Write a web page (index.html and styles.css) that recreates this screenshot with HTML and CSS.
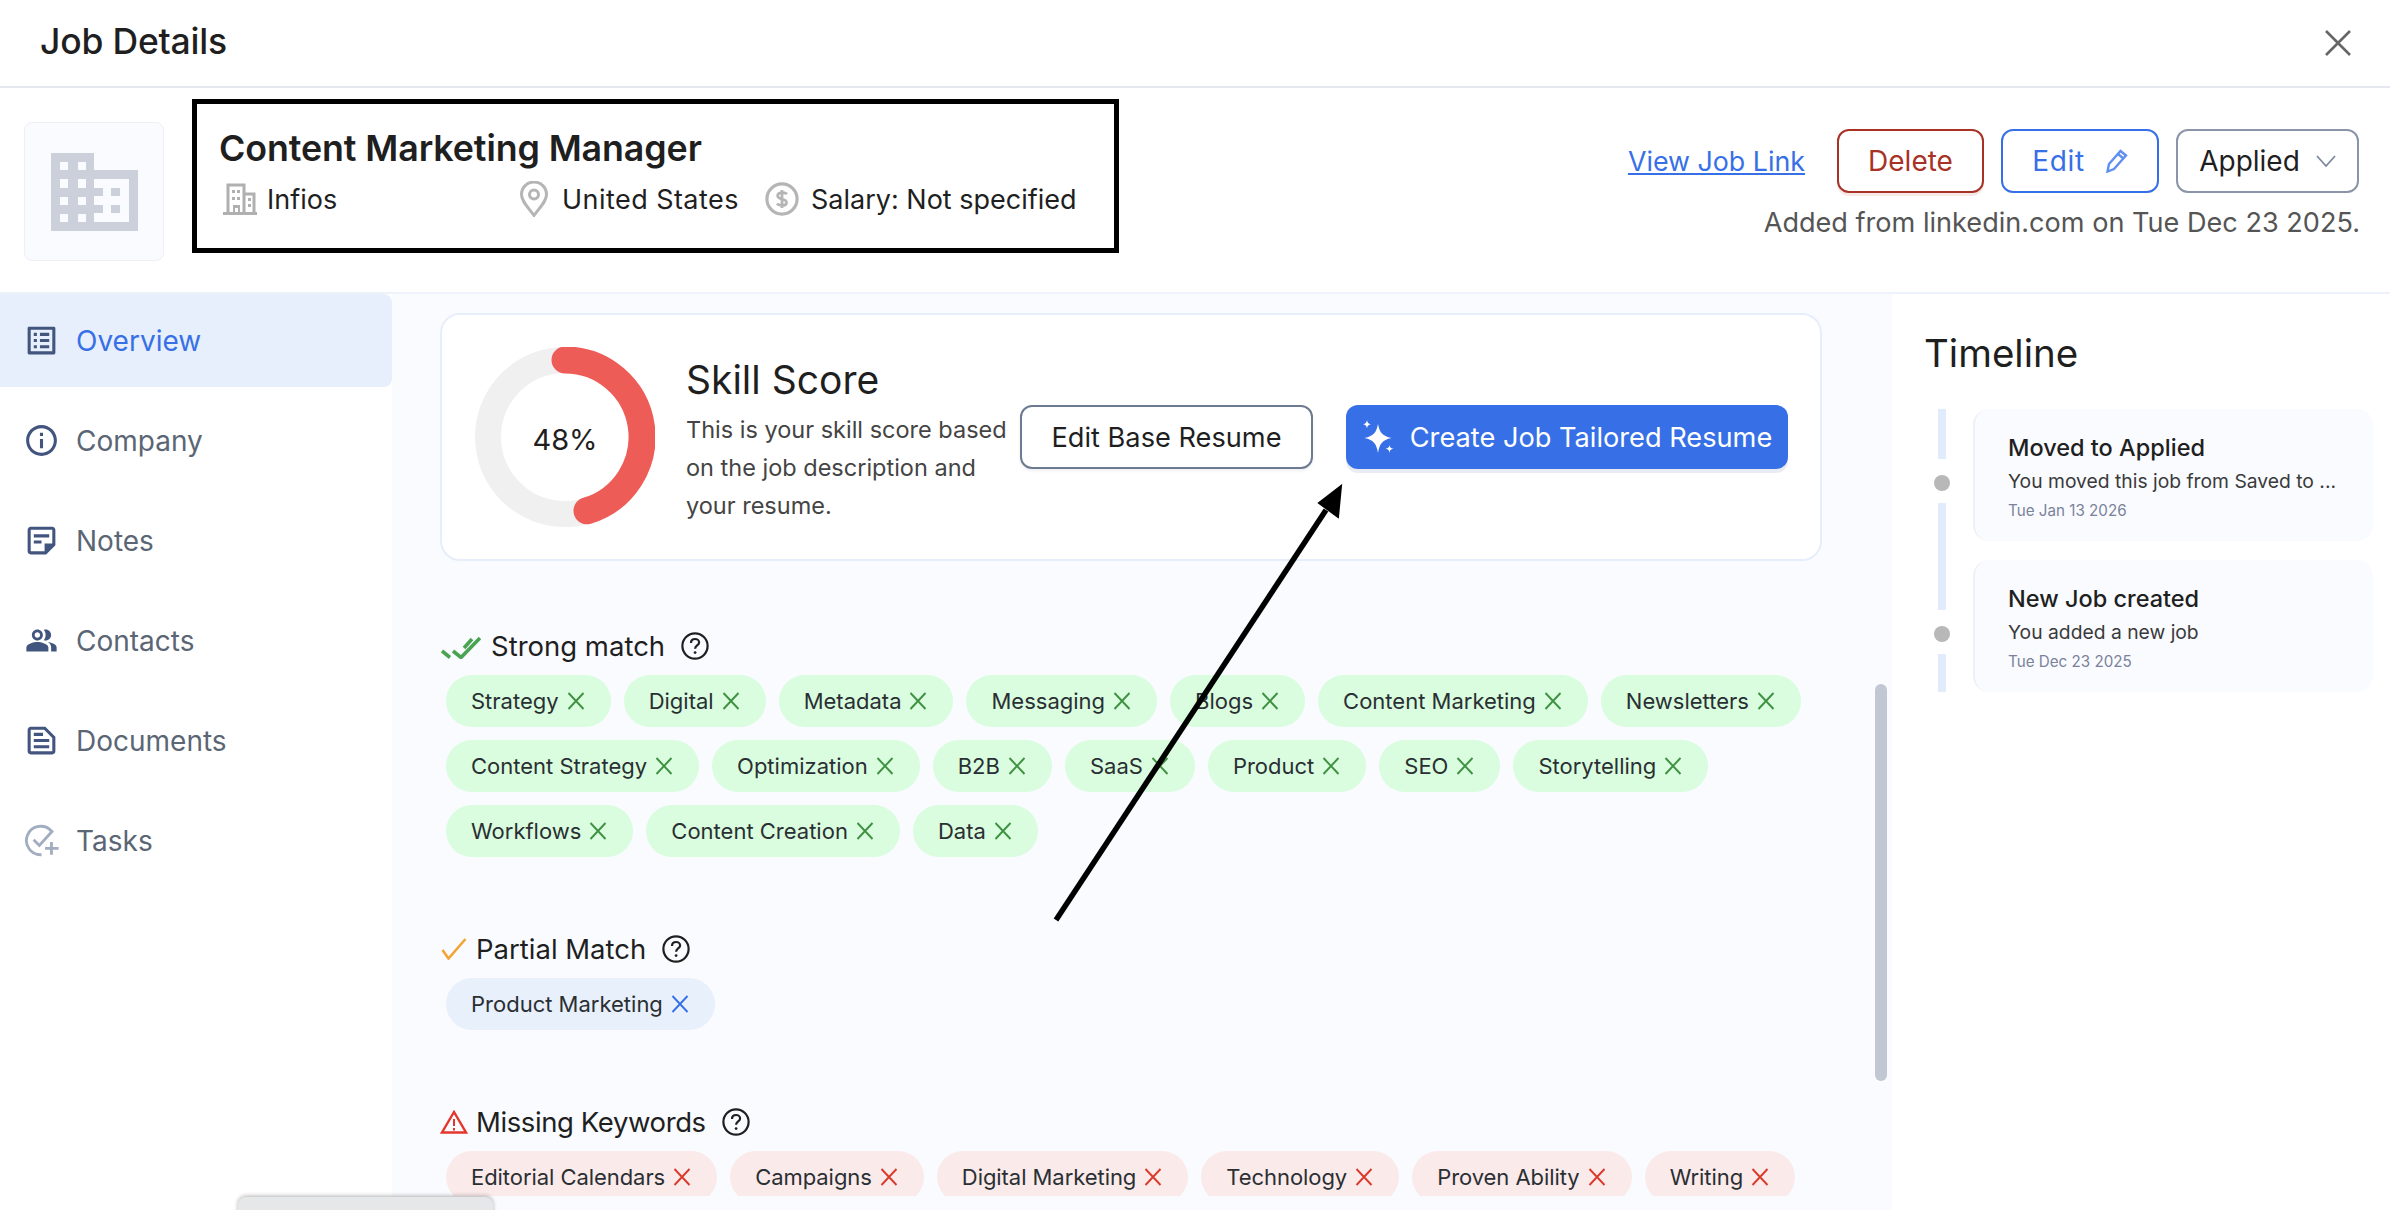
FILE: index.html
```html
<!DOCTYPE html>
<html lang="en">
<head>
<meta charset="utf-8">
<title>Job Details</title>
<link rel="stylesheet" href="styles.css">
</head>
<body>
<svg class="defs" width="0" height="0" aria-hidden="true">
  <symbol id="x" viewBox="0 0 18 18"><path d="M1.500 1 16.500 17M16.500 1 1.500 17" fill="none" stroke="currentColor" stroke-width="1.900"/></symbol>
  <symbol id="help" viewBox="0 0 28 28"><circle cx="14" cy="14" r="12.600" fill="none" stroke="currentColor" stroke-width="2.200"/><path d="M10 11c0-2.600 1.900-4 4.100-4 2.300 0 4 1.500 4 3.500 0 3-4 3-4 6.200" fill="none" stroke="currentColor" stroke-width="2.200"/><circle cx="14.100" cy="20.600" r="1.400" fill="currentColor"/></symbol>
</svg>
<div class="app">
  <header class="topbar">
    <h1 class="page-title">Job Details</h1>
    <svg class="close" viewBox="0 0 26 26"><path d="M1 1 25 25M25 1 1 25" fill="none" stroke="#666" stroke-width="2.600"/></svg>
  </header>

  <section class="job-head">
    <div class="logo-box">
      <svg class="logo-icon" viewBox="0 0 87 78">
        <path d="M0 0h43v17h44v61H0z" fill="#cbd0da"/>
        <g fill="#f9fbff">
          <rect x="9" y="9" width="8" height="8"/><rect x="27" y="9" width="8" height="8"/>
          <rect x="9" y="26" width="8" height="9"/><rect x="27" y="26" width="8" height="9"/>
          <rect x="9" y="44" width="8" height="8"/><rect x="27" y="44" width="8" height="8"/>
          <rect x="9" y="61" width="8" height="8"/><rect x="27" y="61" width="8" height="8"/>
          <rect x="43" y="26" width="35" height="43"/>
        </g>
        <g fill="#cbd0da">
          <rect x="43" y="35" width="9" height="8"/><rect x="43" y="52" width="9" height="8"/>
          <rect x="60" y="35" width="9" height="8"/><rect x="60" y="52" width="9" height="8"/>
        </g>
      </svg>
    </div>
    <div class="job-info">
      <h2 class="job-title">Content Marketing Manager</h2>
      <div class="job-meta">
        <div class="meta-item meta-company">
          <svg class="meta-building" viewBox="0 0 36 32"><path d="M6 31V2h16v29M22 11h10v20M1 30.500h34" fill="none" stroke="#b0b0b0" stroke-width="3"/><path d="M10 7h3v3h-3zm5 0h3v3h-3zM10 14h3v3h-3zm5 0h3v3h-3zM26 15h3v3h-3zm0 6h3v3h-3zM11 22h7v9h-2v-6h-3v6h-2z" fill="#b0b0b0"/></svg>
          <span>Infios</span>
        </div>
        <div class="meta-item meta-location">
          <svg class="meta-pin" viewBox="0 0 28 36"><path d="M14 34.500C8 26 1.500 20.500 1.500 13.500a12.500 12.500 0 0 1 25 0C26.500 20.500 20 26 14 34.500z" fill="none" stroke="#b5b5b5" stroke-width="3"/><circle cx="14" cy="13.500" r="4.500" fill="none" stroke="#b5b5b5" stroke-width="3"/></svg>
          <span class="meta-location-text">United States</span>
        </div>
        <div class="meta-item">
          <svg class="meta-dollar" viewBox="0 0 32 32"><circle cx="16" cy="16" r="14.200" fill="none" stroke="#b5b5b5" stroke-width="3"/><path d="M20.500 11.500c-1-1.700-7.800-2.500-8.600 1-.8 4.500 8.800 2.600 8.400 7-.4 3.500-7.500 3-9 .8M16 7.500v17" fill="none" stroke="#b5b5b5" stroke-width="2.600"/></svg>
          <span>Salary: Not specified</span>
        </div>
      </div>
    </div>
    <div class="job-actions">
      <div class="action-row">
        <a class="job-link" href="#">View Job Link</a>
        <button class="btn btn-delete">Delete</button>
        <button class="btn btn-edit"><span class="btn-edit-label">Edit</span>
          <svg class="btn-icon" viewBox="0 0 22 24"><path d="M1.500 22.500 3 15 14.500 2 20 6.500 8 20zM12 5l5.500 4.500" fill="none" stroke="#5f8fef" stroke-width="2.400"/></svg>
        </button>
        <button class="btn btn-status">Applied
          <svg class="chev" viewBox="0 0 20 12"><path d="M1 1l9 10 9-10" fill="none" stroke="#7d8a9f" stroke-width="1.800"/></svg>
        </button>
      </div>
      <p class="added">Added from linkedin.com on Tue Dec 23 2025.</p>
    </div>
  </section>

  <div class="body">
    <nav class="sidebar">
      <a class="nav-item active" href="#">
        <svg class="nav-icon" viewBox="0 0 24 24"><path d="M19 5v14H5V5h14m1.100-2H3.900c-.5 0-.9.4-.9.9v16.200c0 .4.4.9.9.9h16.200c.4 0 .9-.5.9-.9V3.900c0-.5-.5-.9-.9-.9zM11 7h6v2h-6V7zm0 4h6v2h-6v-2zm0 4h6v2h-6zM7 7h2v2H7zm0 4h2v2H7zm0 4h2v2H7z"/></svg>
        <span>Overview</span>
      </a>
      <a class="nav-item" href="#">
        <svg class="nav-icon" viewBox="0 0 24 24"><path d="M11 7h2v2h-2zm0 4h2v6h-2zm1-9C6.480 2 2 6.480 2 12s4.480 10 10 10 10-4.480 10-10S17.520 2 12 2zm0 18c-4.410 0-8-3.590-8-8s3.590-8 8-8 8 3.590 8 8-3.590 8-8 8z"/></svg>
        <span>Company</span>
      </a>
      <a class="nav-item" href="#">
        <svg class="nav-icon" viewBox="0 0 24 24"><path d="M19 5v9h-5v5H5V5h14m0-2H5c-1.100 0-2 .9-2 2v14c0 1.100.9 2 2 2h10l6-6V5c0-1.100-.9-2-2-2zm-7 11H7v-2h5v2zm5-4H7V8h10v2z"/></svg>
        <span>Notes</span>
      </a>
      <a class="nav-item" href="#">
        <svg class="nav-icon nav-icon-small" viewBox="0 0 24 24"><path d="M16.670 13.130C18.040 14.060 19 15.320 19 17v3h4v-3c0-2.180-3.570-3.470-6.330-3.870zM15 12c2.210 0 4-1.790 4-4s-1.790-4-4-4c-.47 0-.91.1-1.330.24C14.500 5.270 15 6.580 15 8s-.5 2.730-1.330 3.760c.42.14.86.24 1.330.24zM9 12c2.210 0 4-1.790 4-4s-1.790-4-4-4-4 1.790-4 4 1.790 4 4 4zm0-6c1.100 0 2 .9 2 2s-.9 2-2 2-2-.9-2-2 .9-2 2-2zM9 13c-2.670 0-8 1.340-8 4v3h16v-3c0-2.660-5.330-4-8-4z"/></svg>
        <span>Contacts</span>
      </a>
      <a class="nav-item" href="#">
        <svg class="nav-icon" viewBox="0 0 24 24"><path d="M14.500 3H5c-1.100 0-2 .9-2 2v14c0 1.100.9 2 2 2h14c1.100 0 2-.9 2-2V9.500L14.500 3zM19 19H5V5h8.700L19 10.300V19zM7 15h10v2H7zm0-4h10v2H7zm0-4h6v2H7z"/></svg>
        <span>Documents</span>
      </a>
      <a class="nav-item" href="#">
        <svg class="nav-icon nav-icon-muted" viewBox="0 0 26 24"><path d="M20 5.500A10 10 0 1 0 13 22" fill="none" stroke="#a3adc2" stroke-width="2"/><path d="M7.500 11.500l4 4L21 5" fill="none" stroke="#a3adc2" stroke-width="2"/><path d="M20 13v9M15.500 17.500H25" fill="none" stroke="#a3adc2" stroke-width="2"/></svg>
        <span>Tasks</span>
      </a>
    </nav>

    <main class="main">
      <div class="scroll">
        <section class="score-card">
          <svg class="donut" viewBox="0 0 180 180">
            <circle cx="90" cy="90" r="77" fill="none" stroke="#f0f0f0" stroke-width="26"/>
            <path d="M90 13A77 77 0 0 1 112 163.800" fill="none" stroke="#ee5c58" stroke-width="27" stroke-linecap="round"/>
            <text class="donut-label" x="90" y="103" text-anchor="middle">48%</text>
          </svg>
          <div class="score-text">
            <h3 class="score-title">Skill Score</h3>
            <p class="score-desc">This is your skill score based on the job description and your resume.</p>
          </div>
          <button class="btn btn-base">Edit Base Resume</button>
          <button class="btn btn-create">
            <svg class="spark" viewBox="0 0 32 34"><path d="M16 4C17.500 12 20 16 29.500 18 20 20 17.500 24 16 33 14.500 24 12 20 2.500 18 12 16 14.500 12 16 4z" fill="#fff"/><path d="M5 0c.5 2.800 1.200 3.500 4 4.200-2.800.7-3.500 1.400-4 4.300-.5-2.900-1.200-3.600-4-4.300 2.800-.7 3.500-1.400 4-4.200zM27.500 25c.4 2.400 1 3 4 3.700-3 .7-3.600 1.300-4 4.300-.4-3-1-3.600-4-4.300 3-.7 3.600-1.300 4-3.700z" fill="#fff"/></svg>
            Create Job Tailored Resume
          </button>
        </section>

        <section class="match match-strong">
          <h4 class="match-title">
            <svg class="mi-double" viewBox="0 0 40 24"><path d="M1 16l8 6.500M12 16l8 6.500L39 3M23 13l8-9" fill="none" stroke="#4aa352" stroke-width="3.600"/></svg>
            Strong match
            <svg class="help"><use href="#help"/></svg>
          </h4>
          <div class="chips">
            <span class="chip">Strategy<svg class="chip-x"><use href="#x"/></svg></span>
            <span class="chip">Digital<svg class="chip-x"><use href="#x"/></svg></span>
            <span class="chip">Metadata<svg class="chip-x"><use href="#x"/></svg></span>
            <span class="chip">Messaging<svg class="chip-x"><use href="#x"/></svg></span>
            <span class="chip">Blogs<svg class="chip-x"><use href="#x"/></svg></span>
            <span class="chip">Content Marketing<svg class="chip-x"><use href="#x"/></svg></span>
            <span class="chip">Newsletters<svg class="chip-x"><use href="#x"/></svg></span>
            <span class="chip">Content Strategy<svg class="chip-x"><use href="#x"/></svg></span>
            <span class="chip">Optimization<svg class="chip-x"><use href="#x"/></svg></span>
            <span class="chip">B2B<svg class="chip-x"><use href="#x"/></svg></span>
            <span class="chip">SaaS<svg class="chip-x"><use href="#x"/></svg></span>
            <span class="chip">Product<svg class="chip-x"><use href="#x"/></svg></span>
            <span class="chip">SEO<svg class="chip-x"><use href="#x"/></svg></span>
            <span class="chip">Storytelling<svg class="chip-x"><use href="#x"/></svg></span>
            <span class="chip">Workflows<svg class="chip-x"><use href="#x"/></svg></span>
            <span class="chip">Content Creation<svg class="chip-x"><use href="#x"/></svg></span>
            <span class="chip">Data<svg class="chip-x"><use href="#x"/></svg></span>
          </div>
        </section>

        <section class="match match-partial">
          <h4 class="match-title">
            <svg class="mi-check" viewBox="0 0 26 22"><path d="M1.500 12l6 8.500L24.500 1" fill="none" stroke="#f2a534" stroke-width="2.600"/></svg>
            Partial Match
            <svg class="help"><use href="#help"/></svg>
          </h4>
          <div class="chips">
            <span class="chip">Product Marketing<svg class="chip-x"><use href="#x"/></svg></span>
          </div>
        </section>

        <section class="match match-missing">
          <h4 class="match-title">
            <svg class="mi-warn" viewBox="0 0 28 24"><path d="M14 2 2 22.500h24z" fill="none" stroke="#e5362d" stroke-width="2.400"/><path d="M14 9v7M14 18v2.500" fill="none" stroke="#e5362d" stroke-width="2"/></svg>
            Missing Keywords
            <svg class="help"><use href="#help"/></svg>
          </h4>
          <div class="chips">
            <span class="chip">Editorial Calendars<svg class="chip-x"><use href="#x"/></svg></span>
            <span class="chip">Campaigns<svg class="chip-x"><use href="#x"/></svg></span>
            <span class="chip">Digital Marketing<svg class="chip-x"><use href="#x"/></svg></span>
            <span class="chip">Technology<svg class="chip-x"><use href="#x"/></svg></span>
            <span class="chip">Proven Ability<svg class="chip-x"><use href="#x"/></svg></span>
            <span class="chip">Writing<svg class="chip-x"><use href="#x"/></svg></span>
          </div>
        </section>
      </div>
      <div class="scroll-thumb"></div>
    </main>

    <aside class="timeline">
      <h3 class="timeline-title">Timeline</h3>
      <div class="tl-entry">
        <div class="tl-rail"><i class="tl-seg tl-seg-top"></i><i class="tl-dot"></i><i class="tl-seg tl-seg-fill"></i></div>
        <div class="tl-card">
          <div class="tl-head">Moved to Applied</div>
          <div class="tl-sub">You moved this job from Saved to ...</div>
          <div class="tl-date">Tue Jan 13 2026</div>
        </div>
      </div>
      <div class="tl-entry">
        <div class="tl-rail"><i class="tl-seg tl-seg-top"></i><i class="tl-dot"></i><i class="tl-seg tl-seg-fill"></i></div>
        <div class="tl-card">
          <div class="tl-head">New Job created</div>
          <div class="tl-sub">You added a new job</div>
          <div class="tl-date">Tue Dec 23 2025</div>
        </div>
      </div>
    </aside>
  </div>

  <div class="toast-edge"></div>
  <svg class="arrow" viewBox="0 0 2390 1210" aria-hidden="true">
    <path d="M1056 920 1326 510" fill="none" stroke="#000" stroke-width="5.500"/>
    <path d="M1341 486 1319 503 1338 517z" fill="#000" stroke="#000" stroke-width="2"/>
  </svg>
</div>
</body>
</html>
```
FILE: styles.css
```css
* { box-sizing: border-box; }
html, body { margin: 0; height: 100%; overflow: hidden; }
body { background: #fff; color: #1f1f1f; font-family: Inter, "Liberation Sans", sans-serif; }
.defs { position: absolute; }
h1, h2, h3, h4, p { margin: 0; font-weight: 400; }
a { text-decoration: none; }

.app { position: relative; display: flex; flex-direction: column; width: 2390px; height: 1210px; }

.topbar { flex: none; height: 88px; display: flex; align-items: center; justify-content: space-between; padding: 0 39px 4px 40px; border-bottom: 2px solid #e5e9ef; }
.page-title { font-size: 35.500px; font-weight: 500; letter-spacing: -.2px; }
.close { width: 26px; height: 26px; margin-top: 4px; }

.job-head { flex: none; height: 206px; display: flex; align-items: flex-start; padding: 11px 30px 0 24px; border-bottom: 2px solid #edf2fb; }
.logo-box { flex: none; width: 140px; height: 139px; margin-top: 23px; display: flex; align-items: center; justify-content: center; background: #f9fbff; border: 1px solid #edf0f5; border-radius: 8px; }
.logo-icon { width: 87px; height: 78px; margin-left: 1px; }

.job-info { flex: none; width: 927px; height: 154px; margin-left: 28px; padding: 22px 0 0 22px; border: 5px solid #000; }
.job-title { font-size: 35.800px; line-height: 44px; font-weight: 600; letter-spacing: -.1px; }
.job-meta { display: flex; align-items: center; margin-top: 9px; height: 40px; font-size: 27px; }
.meta-item { display: flex; align-items: center; }
.meta-company { width: 298px; margin-left: 3px; }
.meta-location { width: 245px; }
.meta-location-text { letter-spacing: .45px; }
.meta-building { width: 36px; height: 32px; margin-right: 9px; }
.meta-pin { width: 28px; height: 36px; margin-right: 14px; }
.meta-dollar { width: 34px; height: 34px; margin-right: 12px; }

.job-actions { flex: 1; display: flex; flex-direction: column; align-items: flex-end; padding-top: 30px; }
.action-row { display: flex; align-items: center; gap: 17px; margin-right: 1px; }
.job-link { font-size: 26.800px; color: #3770e6; text-decoration: underline; margin-right: 15px; }
.added { margin-top: 13px; font-size: 27.100px; line-height: 34px; color: #555; }

.btn { display: inline-flex; align-items: center; justify-content: center; height: 64px; background: #fff; border-radius: 12px; font-family: inherit; font-size: 28px; color: #1f1f1f; padding: 0; border: 2px solid transparent; }
.btn-delete { width: 147px; border-color: #a83226; color: #a83226; box-shadow: 0 3px 0 #f6e9e7; }
.btn-edit { width: 158px; border-color: #3770e6; color: #3770e6; gap: 21px; }
.btn-edit-label { letter-spacing: .6px; }
.btn-icon { width: 22px; height: 24px; }
.btn-status { width: 183px; border-color: #8a96a8; gap: 16px; }
.chev { width: 20px; height: 12px; }

.body { flex: 1; min-height: 0; display: flex; }
.sidebar { flex: none; width: 392px; display: flex; flex-direction: column; gap: 7px; }
.nav-item { display: flex; align-items: center; gap: 16px; height: 93px; padding-left: 23px; font-size: 28px; color: #5b6675; }
.nav-item.active { background: #e7effc; border-radius: 0 8px 8px 0; color: #3770e6; }
.nav-icon { width: 37px; height: 37px; fill: #42557f; flex: none; }
.nav-icon-small { width: 33px; height: 33px; margin: 0 2px; }
.nav-icon-muted { fill: none; }

.main { position: relative; flex: none; width: 1500px; background: #f9fbff; }
.scroll { height: 902px; overflow: hidden; padding: 19px 0 0 48px; }
.scroll-thumb { position: absolute; left: 1483px; top: 390px; width: 12px; height: 397px; border-radius: 6px; background: #c1c7d3; }

.score-card { width: 1382px; height: 248px; display: flex; align-items: center; padding-left: 33px; background: #fff; border: 2px solid #e6eefb; border-radius: 20px; }
.donut { flex: none; width: 180px; height: 180px; }
.donut-label { font-family: Inter, sans-serif; font-size: 29px; fill: #1f1f1f; }
.score-text { flex: none; width: 334px; margin: 6px 0 0 31px; }
.score-title { font-size: 39px; line-height: 50px; }
.score-desc { margin-top: 6px; font-size: 23.500px; line-height: 38px; color: #444; }
.btn-base { width: 293px; height: 64px; border-color: #6c7a92; font-size: 27.200px; box-shadow: 0 2px 3px rgba(60,70,90,.08); }
.btn-create { width: 442px; height: 64px; margin-left: 33px; gap: 16px; background: #3770e6; color: #fff; font-size: 27.200px; box-shadow: 0 4px 0 #e9ecf2; }
.spark { width: 32px; height: 34px; }

.match-title { display: flex; align-items: center; height: 40px; font-size: 27.500px; }
.match-strong { margin-top: 65px; }
.match-partial, .match-missing { margin-top: 72px; }
.match-missing .match-title { letter-spacing: -.4px; }
.match-missing .chip { letter-spacing: -.06px; }
.mi-double { width: 40px; height: 24px; margin: 2px 10px 0 1px; }
.mi-check { width: 26px; height: 22px; margin: 0 9px 0 1px; }
.mi-warn { width: 28px; height: 24px; margin: 0 8px 0 0; }
.help { width: 28px; height: 28px; margin-left: 16px; color: #1f1f1f; }

.chips { display: flex; flex-wrap: wrap; gap: 13px; padding: 9px 0 0 6px; width: 1382px; }
.chip { display: inline-flex; align-items: center; gap: 8px; height: 52px; padding: 0 26px 0 25px; border-radius: 26px; font-size: 22px; color: #2a2f33; }
.chip-x { width: 18px; height: 18px; flex: none; }
.match-strong .chip { background: #d9fdde; }
.match-strong .chip-x { color: #3f9142; }
.match-partial .chip { background: #e8f0fb; }
.match-partial .chip-x { color: #3770e6; }
.match-missing .chip { background: #fbeaea; }
.match-missing .chip-x { color: #d93a2b; }

.timeline { flex: 1; padding: 34px 17px 0 32px; }
.timeline-title { font-size: 38.500px; line-height: 50px; margin-bottom: 31px; }
.tl-entry { display: flex; }
.tl-rail { flex: none; width: 49px; display: flex; flex-direction: column; align-items: flex-start; padding-left: 10px; }
.tl-seg { display: block; width: 8px; margin-left: 4px; background: #e1ebfb; }
.tl-seg-top { height: 50px; }
.tl-seg-fill { flex: 1; }
.tl-dot { display: block; width: 16px; height: 16px; margin: 16px 0 12px; border-radius: 50%; background: #b8b8b8; }
.tl-card { flex: 1; height: 132px; padding: 24px 0 0 33px; background: #f9fbff; border-left: 2px solid #eef0f5; border-radius: 16px; }
.tl-entry:first-of-type .tl-card { margin-bottom: 19px; }
.tl-head { font-size: 23.500px; line-height: 30px; font-weight: 500; }
.tl-sub { margin-top: 4px; font-size: 19.300px; line-height: 28px; color: #3a3a3a; }
.tl-date { margin-top: 4px; font-size: 15.200px; line-height: 24px; color: #7b829a; }

.toast-edge { position: absolute; left: 238px; top: 1197px; width: 255px; height: 20px; background: #e6e7e8; border-radius: 8px 8px 0 0; box-shadow: 0 -1px 4px rgba(0,0,0,.3); }
.arrow { position: absolute; left: 0; top: 0; width: 2390px; height: 1210px; pointer-events: none; }
```
